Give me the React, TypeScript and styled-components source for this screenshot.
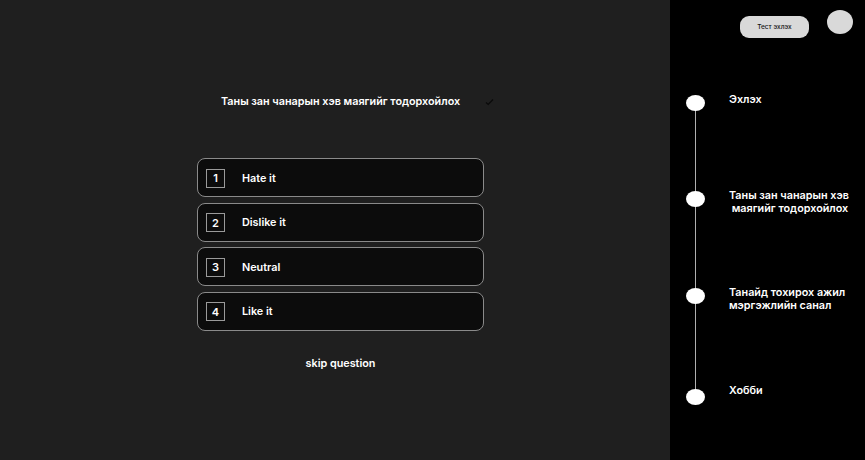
import React from "react";
import styled, { createGlobalStyle } from "styled-components";

const Global = createGlobalStyle`
  html, body { margin: 0; padding: 0; background: #1f1f1f; }
  body { font-family: Inter, "Noto Sans", sans-serif; }
  * { box-sizing: border-box; }
`;

const Page = styled.div`
  display: flex;
  width: 865px;
  height: 460px;
  overflow: hidden;
`;

const Main = styled.main`
  flex: 0 0 670px;
  background: #1f1f1f;
  padding: 95px 0 0 197px;
  display: flex;
  flex-direction: column;
`;

const TitleRow = styled.div`
  display: flex;
  align-items: center;
  height: 14px;
  padding-left: 24px;
`;

const Title = styled.h1`
  margin: 0;
  font-size: 10.8px;
  font-weight: 600;
  color: #ffffff;
  line-height: 14px;
  white-space: nowrap;
`;

const Check = styled.svg`
  margin-left: 25px;
  width: 9px;
  height: 8px;
`;

const Options = styled.div`
  display: flex;
  flex-direction: column;
  gap: 5.67px;
  width: 287px;
  margin-top: 49px;
`;

const Option = styled.div`
  display: flex;
  align-items: center;
  height: 39px;
  padding: 1px 0 0 8px;
  background: #0c0c0c;
  border: 1px solid #8a8a8a;
  border-radius: 8px;
`;

const NumBox = styled.div`
  width: 19px;
  height: 19px;
  border: 1px solid #9a9a9a;
  display: flex;
  align-items: center;
  justify-content: center;
  color: #fff;
  font-size: 11px;
  font-weight: 600;
`;

const OptionLabel = styled.span`
  margin-left: 17px;
  color: #fff;
  font-size: 10.8px;
  font-weight: 600;
`;

const Skip = styled.div`
  width: 287px;
  text-align: center;
  margin-top: 26px;
  color: #fff;
  font-size: 10.8px;
  font-weight: 600;
`;

const Sidebar = styled.aside`
  flex: 1;
  background: #000;
  display: flex;
  flex-direction: column;
`;

const TopBar = styled.div`
  display: flex;
  align-items: flex-start;
  padding: 10px 0 0 70px;
  height: 95px;
`;

const StartButton = styled.button`
  margin-top: 6px;
  width: 69px;
  height: 22px;
  border: none;
  border-radius: 9px;
  background: #d9d9d9;
  color: #111;
  font-family: Inter, sans-serif;
  font-size: 6.5px;
  font-weight: 500;
  padding: 0;
`;

const Avatar = styled.div`
  margin-left: 18px;
  width: 26px;
  height: 24px;
  border-radius: 50%;
  background: #d9d9d9;
`;

const Timeline = styled.div`
  position: relative;
  padding-left: 16px;
  &::before {
    content: "";
    position: absolute;
    left: 25px;
    top: 10px;
    height: 290px;
    width: 1px;
    background: #b0b0b0;
  }
`;

const Step = styled.div<{ $h: number }>`
  position: relative;
  display: flex;
  align-items: flex-start;
  height: ${(p) => p.$h}px;
`;

const Dot = styled.div`
  flex: 0 0 19px;
  height: 16px;
  border-radius: 50%;
  background: #fff;
`;

const StepLabel = styled.div<{ $shift: number }>`
  margin-left: 24px;
  margin-top: ${(p) => p.$shift}px;
  color: #fff;
  font-size: 10.8px;
  font-weight: 600;
  line-height: 13px;
  white-space: pre;
`;

const options = ["Hate it", "Dislike it", "Neutral", "Like it"];
const steps: { label: string; h: number; shift: number }[] = [
  { label: "Эхлэх", h: 96, shift: -2 },
  { label: "Таны зан чанарын хэв\n маягийг тодорхойлох", h: 97, shift: -2 },
  { label: "Танайд тохирох ажил\nмэргэжлийн санал", h: 101, shift: -2 },
  { label: "Хобби", h: 20, shift: -5 },
];

export default function App() {
  return (
    <>
      <Global />
      <Page>
        <Main>
          <TitleRow>
            <Title>Таны зан чанарын хэв маягийг тодорхойлох</Title>
            <Check viewBox="0 0 9 8">
              <path d="M1 4.5 L3.2 6.5 L8 1.5" fill="none" stroke="#0a0a0a" strokeWidth="1.2" />
            </Check>
          </TitleRow>
          <Options>
            {options.map((o, i) => (
              <Option key={o}>
                <NumBox>{i + 1}</NumBox>
                <OptionLabel>{o}</OptionLabel>
              </Option>
            ))}
          </Options>
          <Skip>skip question</Skip>
        </Main>
        <Sidebar>
          <TopBar>
            <StartButton>Тест эхлэх</StartButton>
            <Avatar />
          </TopBar>
          <Timeline>
            {steps.map((s) => (
              <Step key={s.label} $h={s.h}>
                <Dot />
                <StepLabel $shift={s.shift}>{s.label}</StepLabel>
              </Step>
            ))}
          </Timeline>
        </Sidebar>
      </Page>
    </>
  );
}
